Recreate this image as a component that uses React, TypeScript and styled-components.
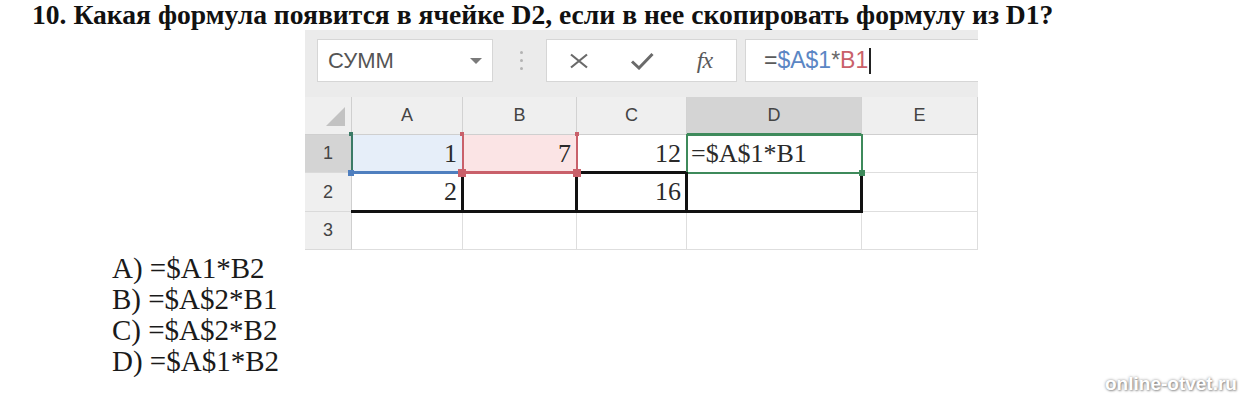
import React from "react";
import styled, { createGlobalStyle } from "styled-components";

const Global = createGlobalStyle`
  html, body { margin: 0; padding: 0; background: #fff; }
  body { font-family: "Liberation Serif", "Times New Roman", serif; color: #111; }
`;

const Page = styled.div`
  position: relative;
  width: 1250px;
  height: 400px;
  overflow: hidden;
  display: flex;
  flex-direction: column;
`;

const Title = styled.h1`
  margin: 0;
  height: 30px;
  padding-left: 32px;
  font-family: "Liberation Serif", "Times New Roman", serif;
  font-weight: bold;
  font-size: 27.6px;
  line-height: 30px;
  white-space: nowrap;
  color: #111;
`;

const Sheet = styled.div`
  margin-left: 305px;
  width: 673px;
  background: #ebebeb;
  overflow: hidden;
`;

const FormulaBar = styled.div`
  height: 67px;
  display: flex;
  align-items: flex-start;
  padding-top: 9px;
  box-sizing: border-box;
`;

const Box = styled.div<{ $w?: number; $ml: number }>`
  height: 43px;
  box-sizing: border-box;
  background: #fff;
  border: 1px solid #d6d6d6;
  margin-left: ${(p) => p.$ml}px;
  ${(p) => (p.$w ? `width: ${p.$w}px;` : "flex: 1; border-right: none;")}
  display: flex;
  align-items: center;
`;

const NameText = styled.span`
  flex: 1;
  padding-left: 10px;
  font-family: "Liberation Sans", Arial, sans-serif;
  font-size: 22px;
  color: #555;
`;

const Arrow = styled.svg`
  margin-right: 10px;
`;

const Dots = styled.div`
  margin-left: 27px;
  height: 43px;
  display: flex;
  flex-direction: column;
  justify-content: center;
  gap: 5px;
  span {
    width: 3px;
    height: 3px;
    border-radius: 50%;
    background: #b3b3b3;
  }
`;

const Buttons = styled(Box)`
  display: grid;
  grid-template-columns: repeat(3, 1fr);
  justify-items: center;
`;

const Fx = styled.span`
  font-family: "Liberation Serif", "Times New Roman", serif;
  font-style: italic;
  font-size: 24px;
  color: #5a5a5a;
  letter-spacing: -1px;
`;

const FormulaText = styled.span`
  padding-left: 18px;
  font-family: "Liberation Sans", Arial, sans-serif;
  font-size: 23px;
  color: #5a5a5a;
  display: flex;
  align-items: center;
`;

const Part = styled.span<{ $c: string }>`
  color: ${(p) => p.$c};
`;

const Caret = styled.span`
  display: inline-block;
  width: 2px;
  height: 26px;
  margin-left: 1px;
  background: #222;
`;

const Grid = styled.div`
  display: grid;
  grid-template-columns: 47px 111px 114px 110px 175px 116px;
  grid-template-rows: 38px 38px 39px 38px;
  background: #fff;
`;

const Corner = styled.div`
  background: #efefef;
  border-right: 1px solid #cfcfcf;
  border-bottom: 1px solid #cfcfcf;
  display: flex;
  align-items: flex-end;
  justify-content: flex-end;
  padding: 0 6px 8px 0;
`;

const ColHead = styled.div<{ $sel?: boolean }>`
  background: ${(p) => (p.$sel ? "#d4d4d4" : "#efefef")};
  border-right: 1px solid #d2d2d2;
  border-bottom: ${(p) => (p.$sel ? "2px solid #3e8a5b" : "1px solid #cfcfcf")};
  display: flex;
  align-items: center;
  justify-content: center;
  font-family: "Liberation Sans", Arial, sans-serif;
  font-size: 18px;
  color: #444;
`;

const RowHead = styled.div<{ $sel?: boolean }>`
  background: ${(p) => (p.$sel ? "#d4d4d4" : "#efefef")};
  border-right: 1px solid #cfcfcf;
  border-bottom: 1px solid #dadada;
  display: flex;
  align-items: center;
  justify-content: center;
  font-family: "Liberation Sans", Arial, sans-serif;
  font-size: 18px;
  color: #444;
`;

type Edges = { $t?: string; $r?: string; $b?: string; $l?: string; $bg?: string; $left?: boolean };

const Cell = styled.div<Edges>`
  position: relative;
  background: ${(p) => p.$bg || "#fff"};
  border-right: 1px solid #dedede;
  border-bottom: 1px solid #dedede;
  display: flex;
  align-items: center;
  justify-content: ${(p) => (p.$left ? "flex-start" : "flex-end")};
  padding: 0 ${(p) => (p.$left ? "0" : "5px")} 0 ${(p) => (p.$left ? "4px" : "0")};
  font-family: "Liberation Serif", "Times New Roman", serif;
  font-size: 26px;
  color: #2a2a2a;
  white-space: nowrap;
  &::after {
    content: "";
    position: absolute;
    top: -1px;
    left: -1px;
    right: -2px;
    bottom: -2px;
    pointer-events: none;
    z-index: 1;
    ${(p) => (p.$t ? `border-top: ${p.$t};` : "")}
    ${(p) => (p.$r ? `border-right: ${p.$r};` : "")}
    ${(p) => (p.$b ? `border-bottom: ${p.$b};` : "")}
    ${(p) => (p.$l ? `border-left: ${p.$l};` : "")}
  }
`;

const Handle = styled.span<{ $v: "top" | "bottom"; $h: "left" | "right"; $c: string; $s: number }>`
  position: absolute;
  z-index: 2;
  width: ${(p) => p.$s}px;
  height: ${(p) => p.$s}px;
  background: ${(p) => p.$c};
  ${(p) => p.$v}: -${(p) => p.$s / 2 + 1}px;
  ${(p) => p.$h}: -${(p) => p.$s / 2 + 1}px;
`;

const Options = styled.div`
  margin-left: 112px;
  padding-top: 3px;
  font-family: "Liberation Serif", "Times New Roman", serif;
  font-size: 29px;
  line-height: 31px;
  color: #1a1a1a;
`;

const Option = styled.div`
  white-space: nowrap;
`;

const Watermark = styled.div`
  position: absolute;
  left: 1105px;
  top: 373px;
  font-family: "Liberation Sans", Arial, sans-serif;
  font-weight: bold;
  font-size: 19px;
  color: #fff;
  text-shadow: 0 0 3px rgba(0, 0, 0, 0.45), 1px 1px 2px rgba(0, 0, 0, 0.3);
`;

const BLACK = "3px solid #111";
const RED = "#c9606a";
const BLUE = "#4f7fbf";
const GREEN = "#3e8a5b";

export default function App() {
  return (
    <Page>
      <Global />
      <Title>10. Какая формула появится в ячейке D2, если в нее скопировать формулу из D1?</Title>
      <Sheet>
        <FormulaBar>
          <Box $w={176} $ml={12}>
            <NameText>СУММ</NameText>
            <Arrow width="12" height="6" viewBox="0 0 12 6">
              <polygon points="0,0 12,0 6,6" fill="#7a7a7a" />
            </Arrow>
          </Box>
          <Dots>
            <span />
            <span />
            <span />
          </Dots>
          <Buttons $w={191} $ml={23}>
            <svg width="20" height="16" viewBox="0 0 20 16">
              <path d="M2 1.5 L18 14.5 M18 1.5 L2 14.5" stroke="#6a6a6a" strokeWidth="2.2" fill="none" />
            </svg>
            <svg width="24" height="18" viewBox="0 0 24 18">
              <path d="M2 9.5 L9 16 L22.5 2" stroke="#6a6a6a" strokeWidth="3" fill="none" />
            </svg>
            <Fx>fx</Fx>
          </Buttons>
          <Box $ml={8}>
            <FormulaText>
              <Part $c="#5a5a5a">=</Part>
              <Part $c="#5b86c4">$A$1</Part>
              <Part $c="#6a6a6a">*</Part>
              <Part $c="#c9616a">B1</Part>
              <Caret />
            </FormulaText>
          </Box>
        </FormulaBar>
        <Grid>
          <Corner>
            <svg width="19" height="19" viewBox="0 0 19 19">
              <polygon points="19,0 19,19 0,19" fill="#c2c2c2" />
            </svg>
          </Corner>
          <ColHead>A</ColHead>
          <ColHead>B</ColHead>
          <ColHead>C</ColHead>
          <ColHead $sel>D</ColHead>
          <ColHead>E</ColHead>

          <RowHead $sel>1</RowHead>
          <Cell $bg="#e6eef9" $l={`2px solid #3b7a66`} $b={`3px solid ${BLUE}`}>
            1
            <Handle $v="top" $h="left" $c="#3b7a66" $s={4} />
            <Handle $v="bottom" $h="left" $c={BLUE} $s={6} />
          </Cell>
          <Cell $bg="#fbe4e5" $l={`2px solid ${RED}`} $r={`2px solid ${RED}`} $b={`3px solid ${RED}`}>
            7
            <Handle $v="top" $h="left" $c={RED} $s={4} />
            <Handle $v="bottom" $h="left" $c={RED} $s={8} />
            <Handle $v="top" $h="right" $c={RED} $s={4} />
            <Handle $v="bottom" $h="right" $c={RED} $s={8} />
          </Cell>
          <Cell $b={BLACK}>12</Cell>
          <Cell $left $t={`2px solid ${GREEN}`} $r={`2px solid ${GREEN}`} $b={`2px solid ${GREEN}`} $l={`2px solid ${GREEN}`}>
            =$A$1*B1
            <Handle $v="bottom" $h="right" $c={GREEN} $s={6} />
          </Cell>
          <Cell />

          <RowHead>2</RowHead>
          <Cell $r={BLACK} $b={BLACK}>2</Cell>
          <Cell $r={BLACK} $b={BLACK} />
          <Cell $r={BLACK} $b={BLACK}>16</Cell>
          <Cell $r={BLACK} $b={BLACK} />
          <Cell />

          <RowHead>3</RowHead>
          <Cell />
          <Cell />
          <Cell />
          <Cell />
          <Cell />
        </Grid>
      </Sheet>
      <Options>
        <Option>A) =$A1*B2</Option>
        <Option>B) =$A$2*B1</Option>
        <Option>C) =$A$2*B2</Option>
        <Option>D) =$A$1*B2</Option>
      </Options>
      <Watermark>online-otvet.ru</Watermark>
    </Page>
  );
}
